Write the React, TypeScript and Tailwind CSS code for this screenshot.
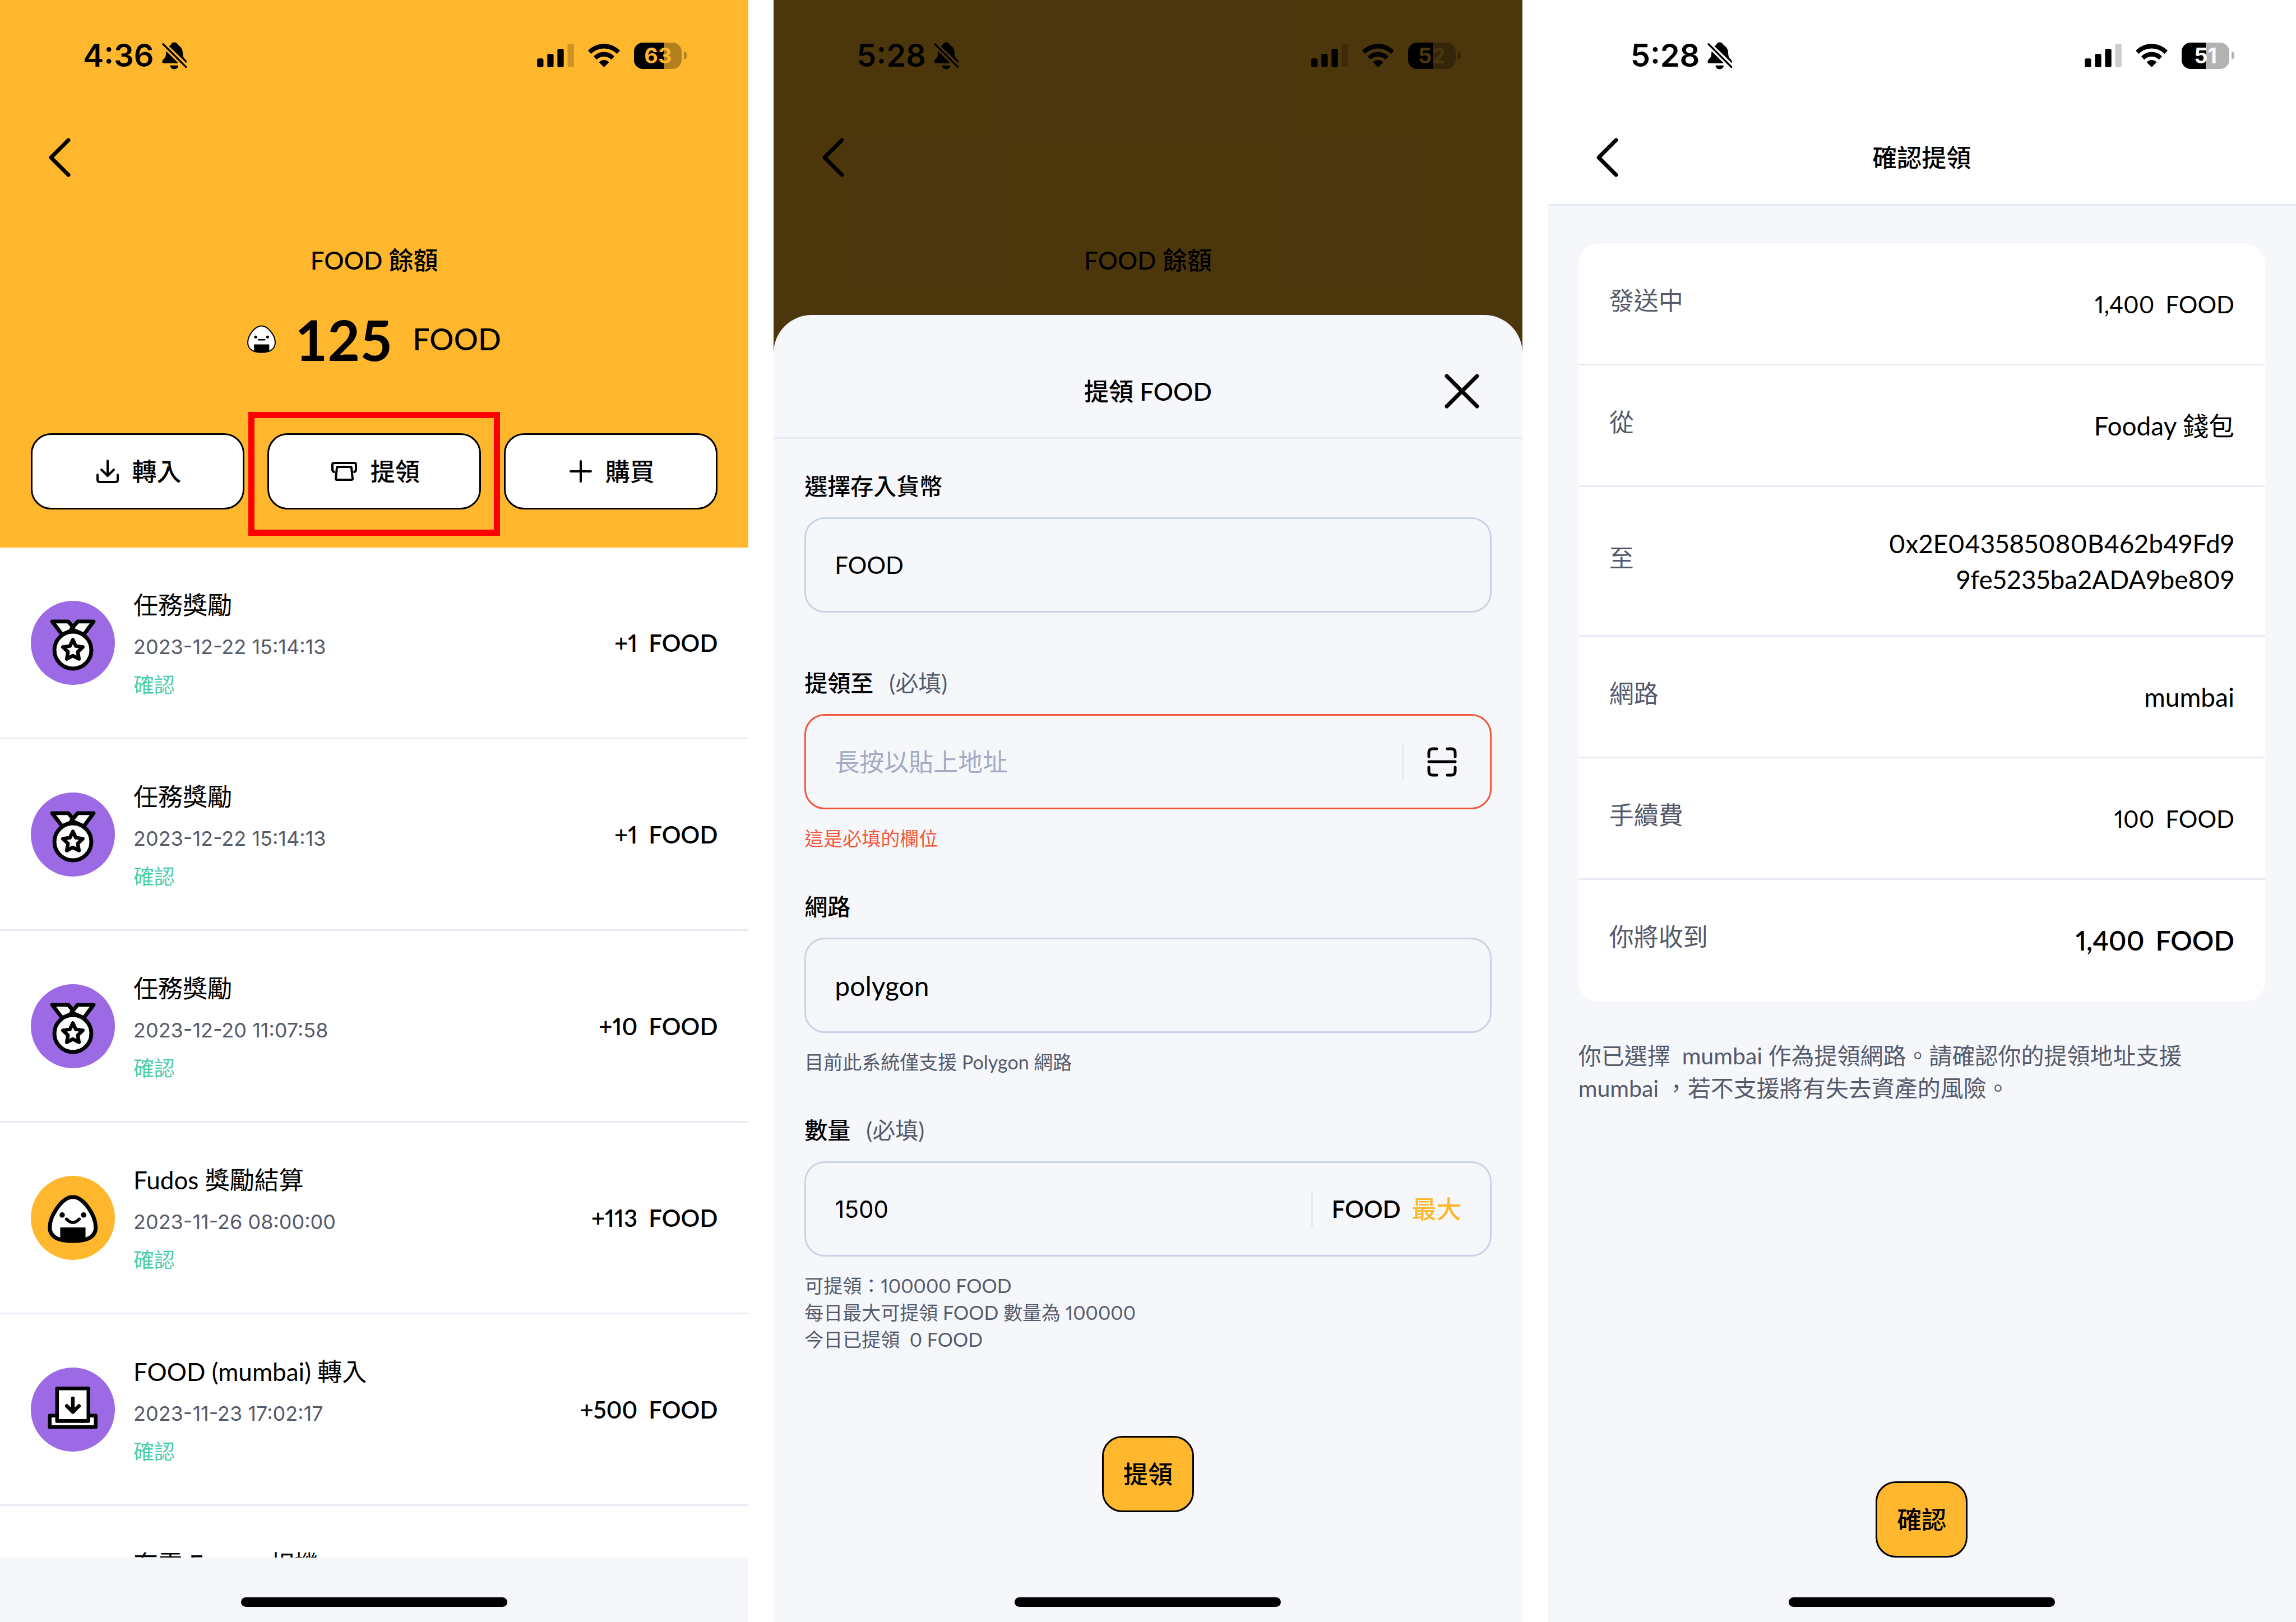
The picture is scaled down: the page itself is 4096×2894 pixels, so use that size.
import React, { useState } from "react";

const orange = "text-[#ffb72d]";

function BellOff() {
  return (
    <svg viewBox="0 0 180 194" className="h-[49px] w-[45px]" aria-hidden="true">
      <path d="M50 29C58 22 64 20 66 14C72-3 104-3 112 16C116 24 146 34 148 74C149 100 154 110 160 117C170 126 176 132 176 140L174 149Z" />
      <path d="M30 64C28 84 28 98 22 108C16 118 2 126 1 138C1 148 6 151 14 151H118Z" />
      <path d="M58 166H116C116 182 102 193 87 193C72 193 58 182 58 166Z" />
      <path d="M8 14L171 177" stroke="currentColor" strokeWidth="13" strokeLinecap="round" />
    </svg>
  );
}

function Signal() {
  return (
    <svg viewBox="0 0 261 167" className="h-[42px] w-[66px]" aria-hidden="true">
      <rect x="0" y="104" width="45" height="63" rx="12" />
      <rect x="72" y="72" width="45" height="95" rx="12" />
      <rect x="144" y="36" width="45" height="131" rx="12" />
      <rect x="216" y="0" width="45" height="167" rx="12" opacity="0.2" />
    </svg>
  );
}

function Wifi() {
  return (
    <svg viewBox="0 0 228 167" className="h-[42px] w-[57px]" aria-hidden="true">
      <path d="M0 48C64-16 164-16 228 48L206 72C156 21 72 21 22 72Z" />
      <path d="M40 90C81 48 147 48 188 90L167 113C138 84 90 84 61 113Z" />
      <path d="M79 132C99 110 129 110 149 132L114 167Z" />
    </svg>
  );
}

function Battery({ level, tone }: { level: number; tone: string }) {
  return (
    <div className="flex items-center gap-[4px]">
      <div className="relative flex h-[47px] w-[85px] items-center justify-center overflow-hidden rounded-[16px] bg-black/30">
        <span className="absolute inset-y-0 left-0 bg-black" style={{ width: `${level}%` }} />
        <span className={`relative font-[Inter] text-[38px] leading-none font-bold ${tone}`}>{level}</span>
      </div>
      <div className="h-[14px] w-[5px] rounded-r-full bg-black/30" />
    </div>
  );
}

function StatusBar({ time, level, tone }: { time: string; level: number; tone: string }) {
  return (
    <div className="flex h-[198px] shrink-0 items-center justify-between pr-[110px] pl-[148px]">
      <div className="flex items-center gap-[14px]">
        <span className="font-[Inter] text-[56px] leading-none font-semibold">{time}</span>
        <BellOff />
      </div>
      <div className="flex items-center gap-[25px]">
        <Signal />
        <Wifi />
        <Battery level={level} tone={tone} />
      </div>
    </div>
  );
}

function NavBar({ title }: { title?: string }) {
  return (
    <div className="grid h-[166px] shrink-0 grid-cols-[1fr_auto_1fr] items-center px-[83px]">
      <button type="button" aria-label="返回" className="justify-self-start">
        <svg viewBox="0 0 46 72" className="h-[72px] w-[46px]" fill="none" stroke="currentColor" strokeWidth="7" strokeLinecap="round" strokeLinejoin="round">
          <path d="M39 5L8 36L39 67" />
        </svg>
      </button>
      {title ? <h1 className="text-[44px] leading-[60px] font-medium">{title}</h1> : <span />}
      <span />
    </div>
  );
}

function HomeIndicator() {
  return <div className="mx-auto mb-[27px] h-[17px] w-[475px] shrink-0 rounded-full bg-black" />;
}

const riceBody = "M173 87C219 87 267 165 267 212C267 252 230 268 173 268C116 268 78 252 78 212C78 165 127 87 173 87Z";

function MedalIcon() {
  return (
    <svg viewBox="0 0 346 346" className="size-[150px] shrink-0" aria-hidden="true">
      <circle cx="173" cy="173" r="173" fill="#9d6ae6" />
      <g fill="#fff" stroke="#000" strokeWidth="16" strokeLinejoin="round">
        <path d="M88 85H154L180 116L129 139Z" />
        <path d="M258 85H193L167 116L218 139Z" />
        <circle cx="173" cy="203" r="76" />
        <path strokeWidth="15" d="M173 160L185 186L214 190L193 210L198 239L173 226L148 239L153 210L132 190L161 186Z" />
      </g>
    </svg>
  );
}

function RiceIcon() {
  return (
    <svg viewBox="0 0 346 346" className="size-[150px] shrink-0" aria-hidden="true">
      <circle cx="173" cy="173" r="173" fill="#ffb72d" />
      <path d={riceBody} fill="#fff" stroke="#000" strokeWidth="16" />
      <path d="M121 212H225V266Q173 276 121 266Z" />
      <circle cx="129" cy="161" r="11" />
      <circle cx="217" cy="161" r="11" />
      <path d="M147 178Q173 206 199 178" fill="none" stroke="#000" strokeWidth="13" strokeLinecap="round" />
    </svg>
  );
}

function DepositIcon() {
  return (
    <svg viewBox="0 0 346 346" className="size-[150px] shrink-0" aria-hidden="true">
      <circle cx="173" cy="173" r="173" fill="#9d6ae6" />
      <g fill="#fff" stroke="#000" strokeWidth="15" strokeLinejoin="round" strokeLinecap="round">
        <path d="M78 198H267V245H78Z" />
        <path d="M108 86H237V220H108Z" />
        <path fill="none" d="M173 127V180M148 158L173 183L198 158" />
      </g>
    </svg>
  );
}

function SmallRice() {
  return (
    <svg viewBox="0 0 200 194" className="h-[50px] w-[51px]" aria-hidden="true">
      <path d="M100 5C146 5 196 72 196 121C196 168 158 190 100 190C42 190 4 168 4 121C4 72 54 5 100 5Z" fill="#fff" stroke="#000" strokeWidth="8" />
      <path d="M48 134H154V184Q100 196 48 184Z" />
      <circle cx="59" cy="82" r="10" />
      <circle cx="143" cy="82" r="10" />
      <path d="M79 102H122" stroke="#000" strokeWidth="10" strokeLinecap="round" />
    </svg>
  );
}

const lineIcon = {
  fill: "none",
  stroke: "currentColor",
  strokeWidth: 4,
  strokeLinecap: "round" as const,
  strokeLinejoin: "round" as const,
  "aria-hidden": true,
};

function InIcon() {
  return (
    <svg viewBox="0 0 40 42" className="h-[42px] w-[40px]" {...lineIcon}>
      <path d="M20 2V28M9 18L20 29L31 18M2 27V36Q2 40 6 40H34Q38 40 38 36V27" />
    </svg>
  );
}

function OutIcon() {
  return (
    <svg viewBox="0 0 46 34" className="h-[34px] w-[46px]" {...lineIcon}>
      <path d="M5 18Q2 17 2 14V5Q2 2 5 2H41Q44 2 44 5V14Q44 17 41 18" />
      <path d="M12 9H34Q36 9 36 11L38 30Q38 32 36 32H10Q8 32 8 30L10 11Q10 9 12 9Z" />
    </svg>
  );
}

function PlusIcon() {
  return (
    <svg viewBox="0 0 40 40" className="size-[40px]" {...lineIcon}>
      <path d="M20 2V38M2 20H38" />
    </svg>
  );
}

function ScanIcon() {
  return (
    <svg viewBox="0 0 53 53" className="size-[53px]" {...lineIcon} strokeWidth={5}>
      <path d="M3 17V10Q3 3 10 3H17M36 3H43Q50 3 50 10V17M50 36V43Q50 50 43 50H36M17 50H10Q3 50 3 43V36M3 26H50" />
    </svg>
  );
}

function WalletButton({ icon, label }: { icon: React.ReactNode; label: string }) {
  return (
    <button
      type="button"
      className="flex h-[136px] w-full items-center justify-center gap-[24px] rounded-[36px] border-3 border-black bg-white pl-[4px] text-[44px] leading-[60px] font-medium"
    >
      {icon}
      {label}
    </button>
  );
}

function WalletHeader({ time, level, children }: { time: string; level: number; children?: React.ReactNode }) {
  return (
    <header className="shrink-0 bg-[#ffb72d] pb-[68px]">
      <StatusBar time={time} level={level} tone={orange} />
      <NavBar />
      <p className="mt-[70px] text-center text-[44px] leading-[60px] font-medium">FOOD 餘額</p>
      {children}
    </header>
  );
}

const records = [
  { icon: <MedalIcon />, title: "任務獎勵", date: "2023-12-22 15:14:13", amount: "+1" },
  { icon: <MedalIcon />, title: "任務獎勵", date: "2023-12-22 15:14:13", amount: "+1" },
  { icon: <MedalIcon />, title: "任務獎勵", date: "2023-12-20 11:07:58", amount: "+10" },
  { icon: <RiceIcon />, title: "Fudos 獎勵結算", date: "2023-11-26 08:00:00", amount: "+113" },
  { icon: <DepositIcon />, title: "FOOD (mumbai) 轉入", date: "2023-11-23 17:02:17", amount: "+500" },
];

function HistoryScreen() {
  return (
    <section className="flex h-full min-w-0 flex-col overflow-hidden bg-[#f5f7fb]">
      <WalletHeader time="4:36" level={63}>
        <div className="mt-[51px] flex h-[120px] items-center justify-center">
          <SmallRice />
          <span className="ml-[34px] text-[100px] leading-[120px] font-bold">125</span>
          <span className="ml-[36px] text-[54px] leading-[120px] font-medium">FOOD</span>
        </div>
        <div className="mt-[108px] grid grid-cols-3 gap-[41px] px-[55px]">
          <WalletButton icon={<InIcon />} label="轉入" />
          <div className="relative">
            <WalletButton icon={<OutIcon />} label="提領" />
            <div className="pointer-events-none absolute -inset-x-[34px] -top-[38px] -bottom-[47px] border-11 border-[#ff0000]" />
          </div>
          <WalletButton icon={<PlusIcon />} label="購買" />
        </div>
      </WalletHeader>
      <ul className="min-h-0 flex-1 overflow-hidden bg-white">
        {records.map((r, i) => (
          <li key={i} className="flex h-[342px] items-center border-b-3 border-[#e7ebf4] px-[55px]">
            {r.icon}
            <div className="ml-[33px] flex-1">
              <p className="text-[44px] leading-[80px]">{r.title}</p>
              <p className="font-[Inter] text-[36px] leading-[70px] text-[#555a6a]">{r.date}</p>
              <p className="text-[37px] leading-[66px] text-[#4bcda9]">確認</p>
            </div>
            <p className="flex gap-[20px] text-[42px] leading-[60px] font-semibold proportional-nums">
              <span>{r.amount}</span>
              <span>FOOD</span>
            </p>
          </li>
        ))}
        <li className="px-[55px] pt-[63px] pl-[238px]">
          <p className="text-[44px] leading-[80px]">充電 Energy 相機</p>
        </li>
      </ul>
      <div className="flex h-[115px] shrink-0 flex-col justify-end">
        <HomeIndicator />
      </div>
    </section>
  );
}

type FieldProps = {
  id: string;
  label: string;
  required?: boolean;
  value?: string;
  placeholder?: string;
  error?: boolean;
  hints?: string[];
  inputClass?: string;
  children?: React.ReactNode;
};

function Field({ id, label, required, value = "", placeholder, error, hints = [], inputClass = "text-[44px]", children }: FieldProps) {
  const [text, setText] = useState(value);
  return (
    <div className="pb-[68px]">
      <label htmlFor={id} className="flex gap-[28px] text-[41px] leading-[60px] font-medium">
        {label}
        {required && <span className="font-normal text-[#555a6a]">(必填)</span>}
      </label>
      <div className={`mt-[25px] flex h-[170px] items-center rounded-[36px] border-3 px-[51px] ${error ? "border-[#f1573a]" : "border-[#cbd3e6]"}`}>
        <input
          id={id}
          value={text}
          placeholder={placeholder}
          onChange={(e) => setText(e.target.value)}
          className={`h-[80px] min-w-0 flex-1 bg-transparent outline-none placeholder:text-[#a3abc2] ${inputClass}`}
        />
        {children}
      </div>
      <div className={`mt-[28px] text-[34px] leading-[48px] proportional-nums ${error ? "text-[#f1573a]" : "text-[#555a6a]"}`}>
        {hints.map((h) => (
          <p key={h} className="whitespace-pre">{h}</p>
        ))}
      </div>
    </div>
  );
}

function PrimaryButton({ label }: { label: string }) {
  return (
    <button type="button" className="mx-auto block h-[136px] w-[164px] shrink-0 rounded-[36px] border-3 border-black bg-[#ffb72d] text-[44px] leading-[60px] font-medium">
      {label}
    </button>
  );
}

function WithdrawScreen() {
  return (
    <section className="relative flex h-full min-w-0 flex-col overflow-hidden bg-white">
      <WalletHeader time="5:28" level={52}>
        <div className="h-[415px]" />
      </WalletHeader>
      <div className="absolute inset-0 flex flex-col bg-black/70 pt-[562px]">
        <div role="dialog" aria-label="提領 FOOD" className="flex flex-1 flex-col rounded-t-[68px] bg-[#f5f7fb]">
          <div className="grid h-[221px] shrink-0 grid-cols-[1fr_auto_1fr] items-center border-b-3 border-[#e7ebf4] px-[74px] pt-[54px]">
            <span />
            <h1 className="text-[44px] leading-[60px] font-medium">提領 FOOD</h1>
            <button type="button" aria-label="關閉" className="justify-self-end">
              <svg viewBox="0 0 68 68" className="size-[68px]" {...lineIcon} strokeWidth={7}>
                <path d="M7 7L61 61M61 7L7 61" />
              </svg>
            </button>
          </div>
          <form className="px-[55px] pt-[55px]" onSubmit={(e) => e.preventDefault()}>
            <Field id="currency" label="選擇存入貨幣" value="FOOD" inputClass="text-[42px]" />
            <Field id="address" label="提領至" required error placeholder="長按以貼上地址" hints={["這是必填的欄位"]}>
              <div className="mr-[8px] flex h-[68px] items-center border-l-3 border-[#e7ebf4] pl-[42px]">
                <button type="button" aria-label="掃描"><ScanIcon /></button>
              </div>
            </Field>
            <Field id="network" label="網路" value="polygon" inputClass="text-[48px]" hints={["目前此系統僅支援 Polygon 網路"]} />
            <Field
              id="amount"
              label="數量"
              required
              value="1500"
              inputClass="font-[Inter] text-[42px]"
              hints={["可提領：100000 FOOD", "每日最大可提領 FOOD 數量為 100000", "今日已提領  0 FOOD"]}
            >
              <div className="flex h-[68px] items-center gap-[20px] border-l-3 border-[#e7ebf4] pl-[34px]">
                <span className="text-[42px] font-semibold">FOOD</span>
                <button type="button" className={`text-[44px] font-medium ${orange}`}>最大</button>
              </div>
            </Field>
            <div className="pt-[80px]">
              <PrimaryButton label="提領" />
            </div>
          </form>
          <div className="mt-auto">
            <HomeIndicator />
          </div>
        </div>
      </div>
    </section>
  );
}

function SummaryRow({ label, children, size = "text-[46px]" }: { label: string; children: React.ReactNode; size?: string }) {
  return (
    <div className="flex items-center justify-between border-b-3 border-[#e7ebf4] px-[55px] pt-[65px] pb-[63px] last:border-transparent">
      <dt className="pb-[14px] text-[44px] leading-[72px] text-[#555a6a]">{label}</dt>
      <dd className={`flex gap-[20px] py-[4px] text-right leading-[64px] proportional-nums ${size}`}>{children}</dd>
    </div>
  );
}

function ConfirmScreen() {
  return (
    <section className="flex h-full min-w-0 flex-col overflow-hidden bg-[#f5f7fb]">
      <header className="shrink-0 border-b-3 border-[#e7ebf4] bg-white">
        <StatusBar time="5:28" level={51} tone="text-white" />
        <NavBar title="確認提領" />
      </header>
      <main className="px-[55px] pt-[68px]">
        <dl className="rounded-[36px] bg-white">
          <SummaryRow label="發送中" size="text-[42px]"><span>1,400</span><span>FOOD</span></SummaryRow>
          <SummaryRow label="從">Fooday 錢包</SummaryRow>
          <SummaryRow label="至">
            <span>0x2E043585080B462b49Fd9<br />9fe5235ba2ADA9be809</span>
          </SummaryRow>
          <SummaryRow label="網路">mumbai</SummaryRow>
          <SummaryRow label="手續費" size="text-[42px]"><span>100</span><span>FOOD</span></SummaryRow>
          <SummaryRow label="你將收到" size="text-[48px] font-semibold"><span>1,400</span><span>FOOD</span></SummaryRow>
        </dl>
        <p className="mt-[68px] text-[41px] leading-[58px] whitespace-pre-wrap text-[#555a6a]">
          {"你已選擇  mumbai 作為提領網路。請確認你的提領地址支援"}
          <br />
          {"mumbai ，若不支援將有失去資產的風險。"}
        </p>
      </main>
      <div className="mt-auto flex flex-col">
        <PrimaryButton label="確認" />
        <div className="mt-[71px]">
          <HomeIndicator />
        </div>
      </div>
    </section>
  );
}

export default function App() {
  return (
    <div
      lang="zh-Hant"
      className="grid h-screen grid-cols-3 gap-[45px] overflow-hidden bg-white font-['Lato','Noto_Sans_CJK_TC',sans-serif] text-black"
    >
      <HistoryScreen />
      <WithdrawScreen />
      <ConfirmScreen />
    </div>
  );
}
